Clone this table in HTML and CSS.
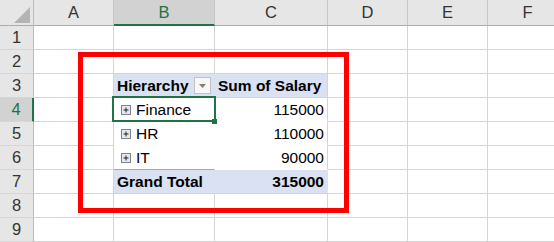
FILE: index.html
```html
<!DOCTYPE html>
<html lang="en">

<head>
  <meta charset="UTF-8">
  <meta name="viewport" content="width=device-width, initial-scale=1.0">
  <title>Pivot Table</title>
  <link rel="stylesheet" href="styles.css">
</head>

<body>
  <div class="sheet">
    <div class="corner">
      <svg width="16" height="16" viewBox="0 0 16 16"><polygon points="16,0 16,16 0,16" fill="#b4b4b4"/></svg>
    </div>
    <div class="col-head">A</div>
    <div class="col-head sel">B</div>
    <div class="col-head">C</div>
    <div class="col-head">D</div>
    <div class="col-head">E</div>
    <div class="col-head">F</div>

    <div class="row-head">1</div>
    <div class="cell"></div>
    <div class="cell"></div>
    <div class="cell"></div>
    <div class="cell"></div>
    <div class="cell"></div>
    <div class="cell"></div>

    <div class="row-head">2</div>
    <div class="cell"></div>
    <div class="cell"></div>
    <div class="cell"></div>
    <div class="cell"></div>
    <div class="cell"></div>
    <div class="cell"></div>

    <div class="row-head">3</div>
    <div class="cell"></div>
    <div class="cell pv pv-head pv-label">
      <span>Hierarchy</span>
      <span class="filter-btn">
        <svg width="7" height="4" viewBox="0 0 7 4"><polygon points="0,0 7,0 3.5,4" fill="#7f7f7f"/></svg>
      </span>
    </div>
    <div class="cell pv pv-head">Sum of Salary</div>
    <div class="cell"></div>
    <div class="cell"></div>
    <div class="cell"></div>

    <div class="row-head sel">4</div>
    <div class="cell"></div>
    <div class="cell pv pv-item active">
      <span class="expand"><svg width="10" height="10" viewBox="0 0 10 10"><rect x="0.5" y="0.5" width="9" height="9" fill="#e4e8f0" stroke="#7d828c"/><path d="M2.5 5h5M5 2.5v5" stroke="#222" stroke-width="1"/></svg></span>Finance
    </div>
    <div class="cell pv num">115000</div>
    <div class="cell"></div>
    <div class="cell"></div>
    <div class="cell"></div>

    <div class="row-head">5</div>
    <div class="cell"></div>
    <div class="cell pv pv-item">
      <span class="expand"><svg width="10" height="10" viewBox="0 0 10 10"><rect x="0.5" y="0.5" width="9" height="9" fill="#e4e8f0" stroke="#7d828c"/><path d="M2.5 5h5M5 2.5v5" stroke="#222" stroke-width="1"/></svg></span>HR
    </div>
    <div class="cell pv num">110000</div>
    <div class="cell"></div>
    <div class="cell"></div>
    <div class="cell"></div>

    <div class="row-head">6</div>
    <div class="cell"></div>
    <div class="cell pv pv-item pv-last">
      <span class="expand"><svg width="10" height="10" viewBox="0 0 10 10"><rect x="0.5" y="0.5" width="9" height="9" fill="#e4e8f0" stroke="#7d828c"/><path d="M2.5 5h5M5 2.5v5" stroke="#222" stroke-width="1"/></svg></span>IT
    </div>
    <div class="cell pv num pv-last">90000</div>
    <div class="cell"></div>
    <div class="cell"></div>
    <div class="cell"></div>

    <div class="row-head">7</div>
    <div class="cell"></div>
    <div class="cell pv pv-total">Grand Total</div>
    <div class="cell pv pv-total num">315000</div>
    <div class="cell"></div>
    <div class="cell"></div>
    <div class="cell"></div>

    <div class="row-head">8</div>
    <div class="cell"></div>
    <div class="cell"></div>
    <div class="cell"></div>
    <div class="cell"></div>
    <div class="cell"></div>
    <div class="cell"></div>

    <div class="row-head">9</div>
    <div class="cell"></div>
    <div class="cell"></div>
    <div class="cell"></div>
    <div class="cell"></div>
    <div class="cell"></div>
    <div class="cell"></div>

    <div class="highlight"></div>
  </div>
</body>

</html>
```

FILE: styles.css
```css
* {
  box-sizing: border-box;
}

body {
  margin: 0;
  padding: 0;
  background: white;
  overflow: hidden;
  font-family: "Liberation Sans", Arial, sans-serif;
}

.sheet {
  position: relative;
  display: grid;
  grid-template-columns: 34px 80px 101px 113px 80px 80px 80px;
  grid-template-rows: 26px repeat(9, 24px);
  width: 554px;
  height: 242px;
  overflow: hidden;
}

.corner {
  background: #e6e6e6;
  border-right: 1px solid #bcbcbc;
  border-bottom: 1px solid #ababab;
  padding: 7px 0 0 14px;
}

.corner svg {
  display: block;
}

.col-head {
  background: #e6e6e6;
  border-right: 1px solid #c6c6c6;
  border-bottom: 1px solid #ababab;
  color: #333;
  font-size: 16.5px;
  line-height: 25px;
  text-align: center;
}

.col-head.sel {
  background: #d2d2d2;
  color: #217346;
  border-bottom: 2px solid #217346;
  line-height: 24px;
}

.row-head {
  background: #e6e6e6;
  border-right: 1px solid #bcbcbc;
  border-bottom: 1px solid #d6d6d6;
  color: #333;
  font-size: 16.5px;
  line-height: 23px;
  text-align: center;
}

.row-head.sel {
  background: #d2d2d2;
  color: #217346;
  border-right: 2px solid #217346;
}

.cell {
  border-right: 1px solid #d4d4d4;
  border-bottom: 1px solid #d4d4d4;
  font-size: 15.5px;
  line-height: 23px;
  color: black;
  padding: 0 3px;
  white-space: nowrap;
}

/* pivot area has no inner gridlines */
.pv {
  background: white;
}

.pv-label,
.pv-item,
.pv-total {
  border-right-color: transparent;
}

.pv-item,
.num.pv:not(.pv-total) {
  border-bottom-color: transparent;
}

.pv-last,
.num.pv-last {
  border-bottom-color: #8ea9db;
}

.pv-head {
  background: #d9e1f2;
  font-weight: bold;
}

.pv-label {
  display: flex;
  align-items: center;
  justify-content: space-between;
}

.filter-btn {
  width: 17px;
  height: 17px;
  border: 1px solid #c2c2c2;
  background: #f7f7f7;
  display: flex;
  align-items: center;
  justify-content: center;
}

.filter-btn svg {
  display: block;
}

.pv-item {
  padding-left: 7px;
  display: flex;
  align-items: center;
}

.expand {
  width: 10px;
  height: 10px;
  margin-right: 5px;
}

.expand svg {
  display: block;
}

.pv-total {
  background: #d9e1f2;
  font-weight: bold;
}

.num {
  text-align: right;
}

.active {
  position: relative;
}

.active::after {
  content: "";
  position: absolute;
  top: -2px;
  left: -2px;
  right: -2px;
  bottom: -1px;
  border: 2px solid #217346;
  z-index: 2;
}

.active::before {
  content: "";
  position: absolute;
  right: -3px;
  bottom: -3px;
  width: 5px;
  height: 5px;
  background: #217346;
  z-index: 3;
}

.highlight {
  position: absolute;
  left: 78px;
  top: 52px;
  width: 271px;
  height: 161px;
  border: 5px solid #ff0000;
  z-index: 5;
}
```
